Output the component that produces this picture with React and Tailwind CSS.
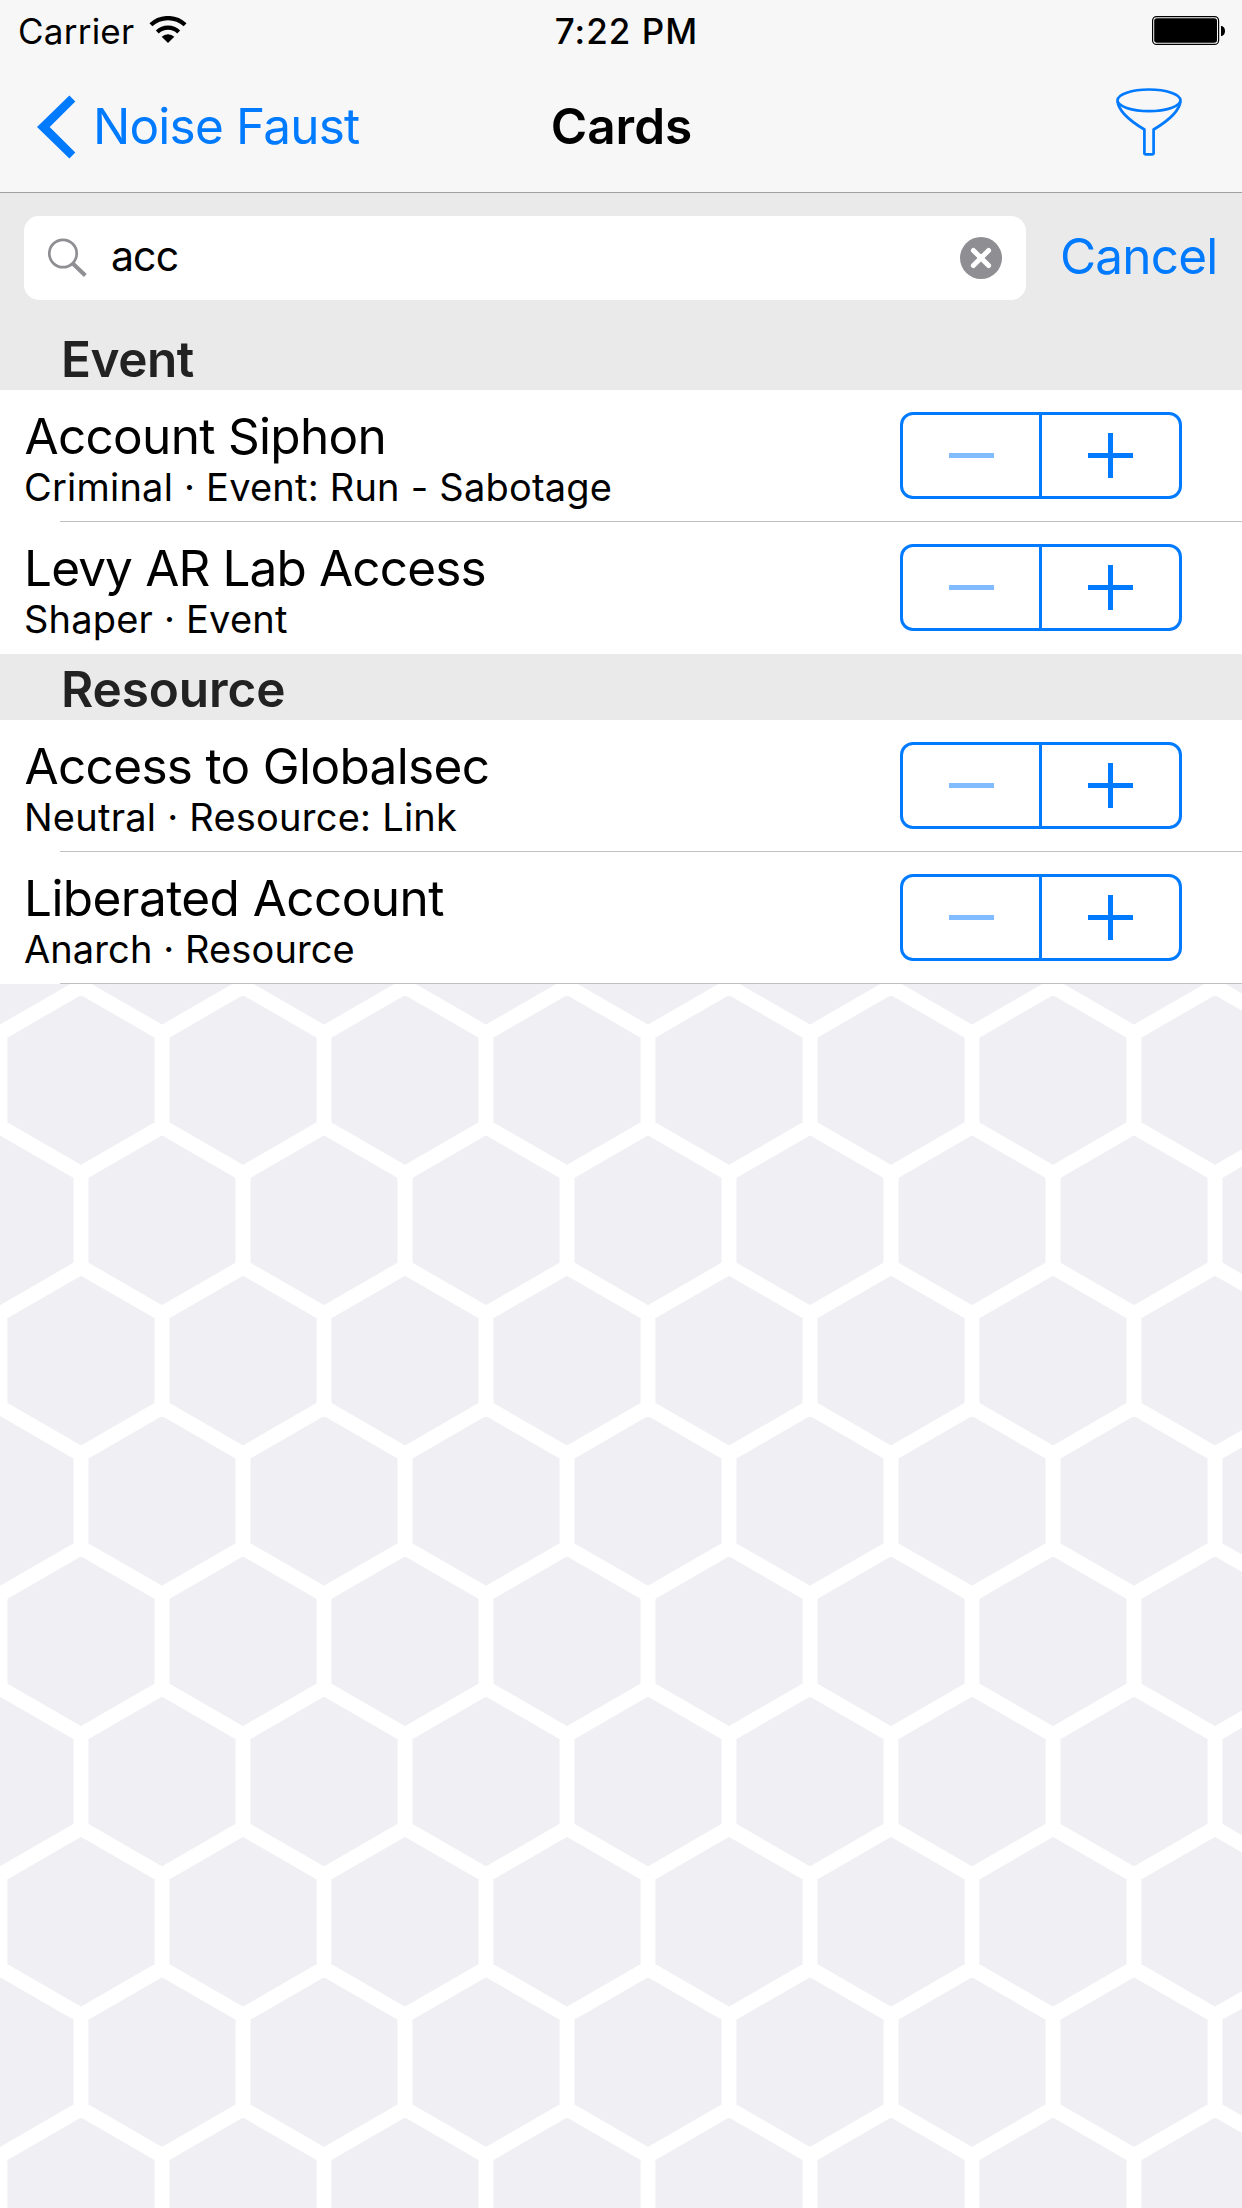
import React from "react";

const SECTIONS = [
  {
    title: "Event",
    tracking: "tracking-[-0.45px]",
    cards: [
      { name: "Account Siphon", nameClass: "pl-[24.5px] tracking-[-0.7px]", detail: "Criminal · Event: Run - Sabotage", detailClass: "pl-6 tracking-[0.22px]", line: true },
      { name: "Levy AR Lab Access", nameClass: "pl-6 tracking-[-0.86px]", detail: "Shaper · Event", detailClass: "pl-6 tracking-[0.2px]", line: false },
    ],
  },
  {
    title: "Resource",
    tracking: "tracking-[-0.1px]",
    cards: [
      { name: "Access to Globalsec", nameClass: "pl-[24.5px] tracking-[-0.67px]", detail: "Neutral · Resource: Link", detailClass: "pl-6 tracking-[0.24px]", line: true },
      { name: "Liberated Account", nameClass: "pl-6 tracking-[-0.57px]", detail: "Anarch · Resource", detailClass: "pl-6 tracking-[0.1px]", line: true },
    ],
  },
];

function StatusBar() {
  return (
    <div className="grid h-[62px] grid-cols-[1fr_auto_1fr] items-center pl-[18px] text-[35px] leading-none text-black">
      <div className="flex items-center gap-[15px]">
        <span className="tracking-[0.24px]">Carrier</span>
        <svg className="mb-[2px] h-[28px] w-[38px]" viewBox="149.5 16 38 28" fill="none" stroke="#000">
          <path d="M151.4 24.8A25 25 0 0 1 185.6 24.8" strokeWidth="4.2" />
          <path d="M157.8 31.9A15.4 15.4 0 0 1 179.2 31.9" strokeWidth="4.2" />
          <path d="M168.5 43L162.2 36.8A9 9 0 0 1 174.8 36.8Z" fill="#000" stroke="none" />
        </svg>
      </div>
      <span className="mr-[4px] -ml-[3px] font-medium tracking-[1.02px]">7:22 PM</span>
      <svg className="mr-4 h-[30px] w-[75px] justify-self-end" viewBox="1151 16 75 30">
        <rect x="1152.6" y="16.6" width="66" height="27.8" rx="4" fill="none" stroke="#000" strokeWidth="1.2" />
        <rect x="1154.2" y="18.2" width="62.8" height="24.6" rx="2.8" />
        <path d="M1221 26C1226.3 26 1226.3 36 1221 36Z" />
      </svg>
    </div>
  );
}

function NavBar() {
  return (
    <div className="grid h-[130px] grid-cols-[1fr_auto_1fr] items-center pl-[36px] text-[49.5px] leading-none">
      <div className="flex items-center gap-[17px] text-[#007aff]">
        <svg className="mb-[1px] h-[64px] w-[40px]" viewBox="36 94.4 40 64" fill="currentColor">
          <path d="M37 126.4L69.4 94.8L75.3 100.8L49.7 126.4L75.3 151.8L69.4 157.8Z" />
        </svg>
        <span className="tracking-[-0.8px]">Noise Faust</span>
      </div>
      <span className="-ml-[35px] font-semibold tracking-[0px]">Cards</span>
      <svg
        className="mr-[58px] mb-[10px] h-[70px] w-[70px] justify-self-end"
        viewBox="1114 87 70 70"
        fill="none"
        stroke="#007aff"
        strokeWidth="2.7"
        strokeLinejoin="round"
      >
        <ellipse cx="1149" cy="100.3" rx="31.5" ry="10.8" />
        <path d="M1117.5 101C1118.5 111 1130 121 1144.4 129.5V153Q1144.4 154.4 1146 154.4H1152Q1153.6 154.4 1153.6 153V129.5C1168 121 1179.5 111 1180.5 101" />
      </svg>
    </div>
  );
}

function SearchBar() {
  return (
    <div className="flex h-[131px] pt-[23px] pl-6 leading-none">
      <div className="flex h-[84px] w-[1002px] items-center rounded-[15px] bg-white pr-6 pl-6">
        <svg className="mb-[3px] h-[40px] w-[40px]" viewBox="48 237.5 40 40" fill="none" stroke="#8e8e93">
          <circle cx="63" cy="254" r="13.7" strokeWidth="2.7" />
          <path d="M72.8 264L85.3 276" strokeWidth="4" />
        </svg>
        <span className="mb-[4px] ml-[23px] text-[41px] tracking-[-0.9px] text-black">acc</span>
        <svg className="ml-auto h-[42px] w-[42px]" viewBox="0 0 42 42">
          <circle cx="21" cy="21" r="21" fill="#8e8e93" />
          <path d="M13.4 13.4L28.6 28.6M28.6 13.4L13.4 28.6" stroke="#fff" strokeWidth="5" strokeLinecap="round" />
        </svg>
      </div>
      <span className="ml-[34px] flex h-[82px] items-center text-[49.5px] tracking-[-0.8px] text-[#007aff]">Cancel</span>
    </div>
  );
}

function Stepper() {
  return (
    <div className="mr-[60px] flex h-[87px] w-[282px] rounded-[13px] border-3 border-[#007aff]">
      <div className="flex w-[139px] items-center justify-center border-r-3 border-[#007aff]">
        <div className="ml-px h-[5px] w-[45px] bg-[#80bcff]" />
      </div>
      <div className="grid flex-1 place-items-center">
        <svg className="h-[45px] w-[45px]" viewBox="0 0 45 45" fill="#007aff">
          <path d="M20 0H25V20H45V25H25V45H20V25H0V20H20Z" />
        </svg>
      </div>
    </div>
  );
}

function CardRow({ card }) {
  return (
    <div className="flex h-[132px] flex-col bg-white text-black">
      <div className="flex h-[131px] justify-between">
        <div className="pt-[18px]">
          <div className={"text-[49.5px] leading-[56px] " + card.nameClass}>{card.name}</div>
          <div className={"text-[38px] leading-[46px] " + card.detailClass}>{card.detail}</div>
        </div>
        <div className="pt-[22px]">
          <Stepper />
        </div>
      </div>
      {card.line && <div className="ml-[60px] h-px bg-[#c0bfc3]" />}
    </div>
  );
}

const HEX_RADIUS = 162 / Math.sqrt(3);
const HEXES = [];
for (let row = -1; row < 9; row++) {
  for (let col = -1; col < 9; col++) {
    const cx = 81 + col * 162 + (row % 2 ? 81 : 0);
    const cy = 96 + row * 140.3;
    const h = HEX_RADIUS;
    HEXES.push(`M${cx} ${cy - h}L${cx + 81} ${cy - h / 2}V${cy + h / 2}L${cx} ${cy + h}L${cx - 81} ${cy + h / 2}V${cy - h / 2}Z`);
  }
}

function Honeycomb() {
  return (
    <svg className="block h-[1224px] w-full bg-[#efeff4]" viewBox="0 0 1242 1224">
      <path d={HEXES.join("")} fill="none" stroke="#fff" strokeWidth="15" />
    </svg>
  );
}

export default function App() {
  return (
    <div className="flex h-[2208px] w-[1242px] flex-col overflow-hidden bg-[#eaeaea] font-['Inter',sans-serif] whitespace-nowrap">
      <header className="h-[193px] border-b border-[#a0a0a2] bg-[#f7f7f8]">
        <StatusBar />
        <NavBar />
      </header>
      <SearchBar />
      {SECTIONS.map((section) => (
        <section key={section.title}>
          <h2 className={"flex h-[66px] items-center pt-[5px] pl-[61px] text-[49.5px] leading-none font-semibold text-[#222] " + section.tracking}>
            {section.title}
          </h2>
          {section.cards.map((card) => (
            <CardRow key={card.name} card={card} />
          ))}
        </section>
      ))}
      <Honeycomb />
    </div>
  );
}
